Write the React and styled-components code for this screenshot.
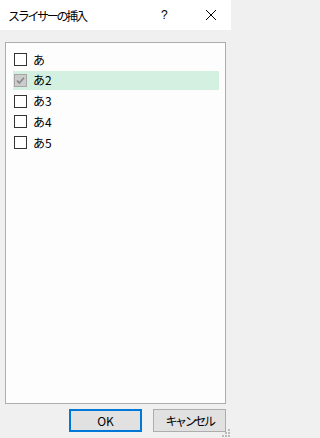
import React from "react";
import styled, { createGlobalStyle } from "styled-components";

const Global = createGlobalStyle`
  html, body { margin: 0; padding: 0; }
  body {
    background: #f0f0f0;
    font-family: "Noto Sans CJK JP", "Noto Sans", sans-serif;
    color: #000;
  }
`;

const Dialog = styled.div`
  width: 231px;
  height: 438px;
  display: flex;
  flex-direction: column;
  background: #f0f0f0;
  position: relative;
  overflow: hidden;
`;

const TitleBar = styled.div`
  height: 30px;
  flex: none;
  background: #ffffff;
  display: flex;
  align-items: center;
  padding-left: 8px;
  box-sizing: border-box;
`;

const Title = styled.div`
  flex: 1;
  font-size: 12px;
  line-height: 14px;
  letter-spacing: -2.3px;
  color: #000;
  margin-top: 1px;
`;

const HelpBtn = styled.div`
  width: 14px;
  font-family: "Liberation Sans", sans-serif;
  font-size: 12px;
  line-height: 14px;
  margin-right: 30px;
  color: #000;
`;

const CloseBtn = styled.div`
  width: 12px;
  height: 12px;
  margin-right: 14px;
  display: flex;
`;

const Body = styled.div`
  flex: 1;
  display: flex;
  flex-direction: column;
  padding: 12px 5px 7px 5px;
  box-sizing: border-box;
`;

const ListBox = styled.div`
  height: 362px;
  box-sizing: border-box;
  background: #fdfdfd;
  border: 1px solid #adadad;
  padding: 7px 6px 0 7px;
  display: flex;
  flex-direction: column;
  gap: 1.75px;
`;

const Row = styled.div`
  height: 19px;
  display: flex;
  align-items: center;
  padding-left: 1px;
  background: ${(p) => (p.$selected ? "#d3f0e0" : "transparent")};
`;

const Box = styled.div`
  width: 13px;
  height: 13px;
  box-sizing: border-box;
  border: 1px solid ${(p) => (p.$checked ? "#a6a6a6" : "#333333")};
  background: ${(p) => (p.$checked ? "#cccccc" : "#ffffff")};
  display: flex;
  align-items: center;
  justify-content: center;
  flex: none;
`;

const Label = styled.span`
  margin-left: 6px;
  font-size: 12px;
  line-height: 14px;
  color: #000;
`;

const Footer = styled.div`
  display: flex;
  justify-content: flex-end;
  gap: 11px;
  margin-top: 5px;
`;

const Button = styled.div`
  width: 73px;
  height: 23px;
  box-sizing: border-box;
  background: #e1e1e1;
  border: ${(p) => (p.$default ? "2px solid #0078d7" : "1px solid #adadad")};
  display: flex;
  align-items: center;
  justify-content: center;
  font-size: 12px;
  line-height: 14px;
  letter-spacing: ${(p) => (p.$tight ? "-2.4px" : "0")};
  color: #000;
`;

const Grip = styled.svg`
  position: absolute;
  right: 0;
  bottom: 0;
`;

const items = [
  { label: "あ", checked: false },
  { label: "あ2", checked: true },
  { label: "あ3", checked: false },
  { label: "あ4", checked: false },
  { label: "あ5", checked: false },
];

export default function App() {
  return (
    <>
      <Global />
      <Dialog>
        <TitleBar>
          <Title>スライサーの挿入</Title>
          <HelpBtn>?</HelpBtn>
          <CloseBtn>
            <svg width="12" height="12" viewBox="0 0 12 12">
              <path d="M1 1 L11 11 M11 1 L1 11" stroke="#000" strokeWidth="1" fill="none" />
            </svg>
          </CloseBtn>
        </TitleBar>
        <Body>
          <ListBox>
            {items.map((it) => (
              <Row key={it.label} $selected={it.checked}>
                <Box $checked={it.checked}>
                  {it.checked && (
                    <svg width="11" height="11" viewBox="0 0 11 11">
                      <path d="M2 5.5 L4.3 8 L9 2.8" stroke="#888888" strokeWidth="1.6" fill="none" />
                    </svg>
                  )}
                </Box>
                <Label>{it.label}</Label>
              </Row>
            ))}
          </ListBox>
          <Footer>
            <Button $default>OK</Button>
            <Button $tight>キャンセル</Button>
          </Footer>
        </Body>
        <Grip width="10" height="10" viewBox="0 0 10 10">
          {[
            [7, 1],
            [4, 4],
            [7, 4],
            [1, 7],
            [4, 7],
            [7, 7],
          ].map(([x, y]) => (
            <rect key={`${x}-${y}`} x={x} y={y} width="2" height="2" fill="#bcbcbc" />
          ))}
        </Grip>
      </Dialog>
    </>
  );
}
